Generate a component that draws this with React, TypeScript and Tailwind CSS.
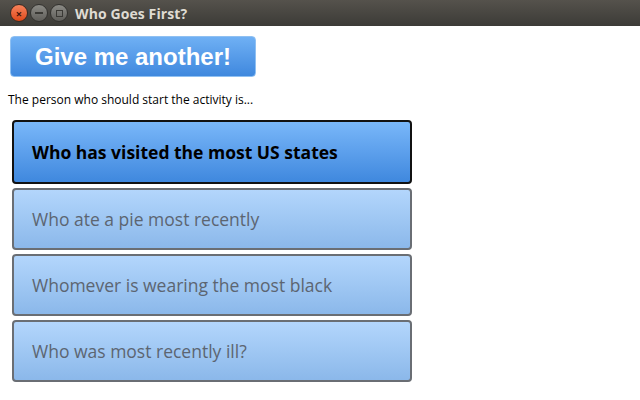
const options = [
  'Who has visited the most US states',
  'Who ate a pie most recently',
  'Whomever is wearing the most black',
  'Who was most recently ill?',
];

export default function App() {
  const selected = 0;

  return (
    <div className="w-[640px] h-[400px] bg-white overflow-hidden font-['Open_Sans',sans-serif]">
      {/* title bar */}
      <div className="h-[26px] bg-gradient-to-b from-[#55524c] to-[#3c3b37] flex items-center pl-[10px]">
        <div className="flex items-center gap-[2px]">
          <div className="w-[18px] h-[18px] rounded-full bg-gradient-to-b from-[#f7825a] to-[#de4816] border border-[#3a2a22] flex items-center justify-center text-[#40140a] text-[11px] leading-none font-bold">
            ×
          </div>
          <div className="w-[18px] h-[18px] rounded-full bg-gradient-to-b from-[#8c8b86] to-[#5f5e5a] border border-[#33322f] flex items-center justify-center">
            <div className="w-[8px] h-[2px] bg-[#3a3935]" />
          </div>
          <div className="w-[18px] h-[18px] rounded-full bg-gradient-to-b from-[#8c8b86] to-[#5f5e5a] border border-[#33322f] flex items-center justify-center">
            <div className="w-[7px] h-[7px] border-[1.5px] border-[#3a3935]" />
          </div>
        </div>
        <span className="ml-[7px] text-[#dfdbd2] text-[14px] font-bold tracking-[0.1px]">
          Who Goes First?
        </span>
      </div>

      <div className="pl-[10px] pt-[10px]">
        <button className="w-[246px] h-[41px] rounded-[4px] bg-gradient-to-b from-[#6fb0f4] to-[#3f88de] border border-[#8fc0f2] text-white text-[24px] font-bold font-['Liberation_Sans',sans-serif] leading-none">
          Give me another!
        </button>
      </div>

      <p className="pl-[8px] mt-[15px] text-[12px] leading-[16px] text-black">
        The person who should start the activity is...
      </p>

      <div className="pl-[12px] mt-[12px] flex flex-col gap-[4px] w-[412px]">
        {options.map((text, i) =>
          i === selected ? (
            <div
              key={text}
              className="h-[64px] rounded-[4px] border-2 border-[#111] bg-gradient-to-b from-[#79b7f9] to-[#3f88de] flex items-center pl-[18px] text-[17.5px] font-bold text-black"
            >
              {text}
            </div>
          ) : (
            <div
              key={text}
              className="h-[62px] rounded-[4px] border-2 border-[#6a6e74] bg-gradient-to-b from-[#b3d6fc] to-[#8bb8ea] flex items-center pl-[18px] text-[17.5px] text-[#5c6571]"
            >
              {text}
            </div>
          )
        )}
      </div>
    </div>
  );
}
